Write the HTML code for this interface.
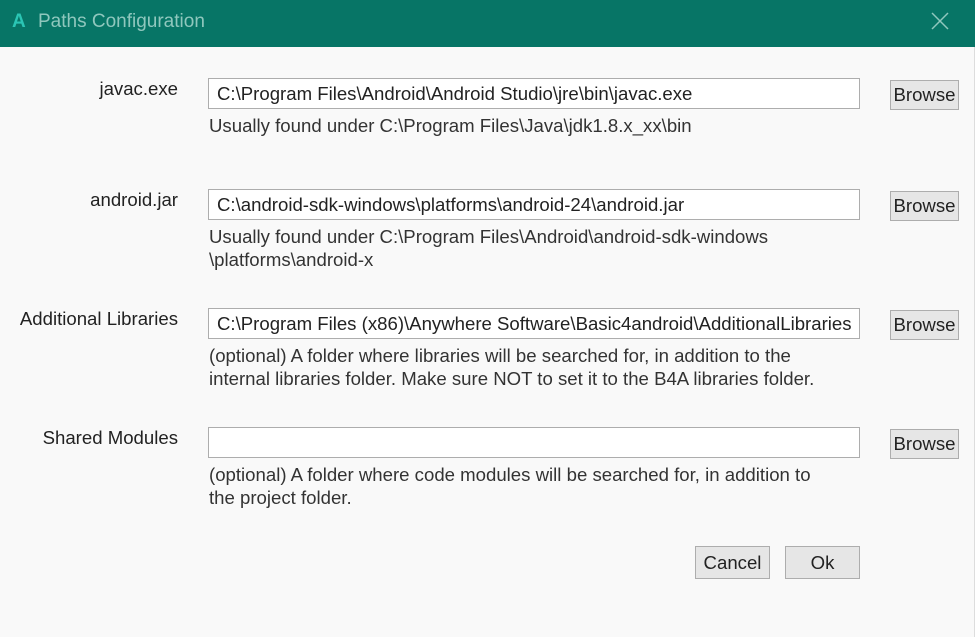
<!DOCTYPE html>
<html><head><style>
*{margin:0;padding:0;box-sizing:border-box}
body{width:978px;height:637px;background:#fff;font-family:"Liberation Sans",sans-serif;font-size:18.6px;color:#222;position:relative;overflow:hidden}
.win{position:absolute;left:0;top:0;width:975px;height:637px;background:#f9f9f9;border-right:1px solid #ddd}
.title{position:absolute;left:0;top:0;width:975px;height:47px;background:#077566;color:#8fc7bd;font-size:19px}
.title .a{position:absolute;left:12px;top:11px;font-weight:bold;color:#2bc5b4;font-size:19px}
.title .t{position:absolute;left:38px;top:11px}
.title .x{position:absolute;left:930px;top:10px}
.lbl{position:absolute;right:796px;text-align:right;white-space:nowrap}
.in{position:absolute;left:208px;width:652px;height:31px;background:#fff;border:1px solid #adadad;padding:4px 8px;white-space:nowrap;overflow:hidden}
.btn{position:absolute;left:890px;width:69px;height:30px;background:#e6e6e6;border:1px solid #adadad;text-align:center;line-height:28px;overflow:hidden;white-space:nowrap}
.h{position:absolute;left:209px;line-height:23px;color:#333;white-space:nowrap}
.b2{position:absolute;top:546px;height:33px;width:75px;background:#e6e6e6;border:1px solid #adadad;text-align:center;line-height:31px}
</style></head><body>
<div class="win">
<div class="title"><span class="a">A</span><span class="t">Paths Configuration</span>
<svg class="x" width="20" height="22" viewBox="0 0 20 22"><path d="M2 3L18 19M18 3L2 19" stroke="#8fc7bd" stroke-width="1.5"/></svg></div>

<div class="lbl" style="top:78px">javac.exe</div>
<div class="in" style="top:78px">C:\Program Files\Android\Android Studio\jre\bin\javac.exe</div>
<div class="btn" style="top:80px">Browse</div>
<div class="h" style="top:114px">Usually found under C:\Program Files\Java\jdk1.8.x_xx\bin</div>

<div class="lbl" style="top:189px">android.jar</div>
<div class="in" style="top:189px">C:\android-sdk-windows\platforms\android-24\android.jar</div>
<div class="btn" style="top:191px">Browse</div>
<div class="h" style="top:225px">Usually found under C:\Program Files\Android\android-sdk-windows<br>\platforms\android-x</div>

<div class="lbl" style="top:308px">Additional Libraries</div>
<div class="in" style="top:308px">C:\Program Files (x86)\Anywhere Software\Basic4android\AdditionalLibraries</div>
<div class="btn" style="top:310px">Browse</div>
<div class="h" style="top:344px">(optional) A folder where libraries will be searched for, in addition to the<br>internal libraries folder. Make sure NOT to set it to the B4A libraries folder.</div>

<div class="lbl" style="top:427px">Shared Modules</div>
<div class="in" style="top:427px"></div>
<div class="btn" style="top:429px">Browse</div>
<div class="h" style="top:463px">(optional) A folder where code modules will be searched for, in addition to<br>the project folder.</div>

<div class="b2" style="left:695px">Cancel</div>
<div class="b2" style="left:785px">Ok</div>
</div>
</body></html>
